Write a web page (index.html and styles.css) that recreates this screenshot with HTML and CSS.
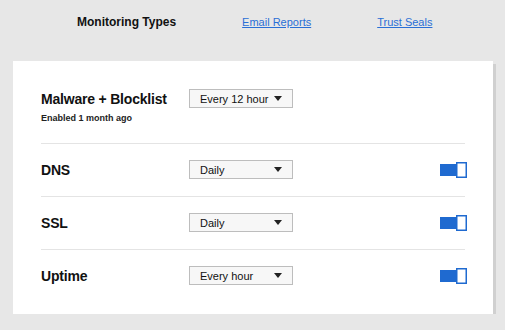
FILE: index.html
```html
<!DOCTYPE html>
<html lang="en">

<head>
    <meta charset="UTF-8">
    <meta name="viewport" content="width=device-width, initial-scale=1.0">
    <title>Monitoring Settings</title>
    <link rel="stylesheet" href="styles.css">
</head>

<body>

    <!-- Tabs -->
    <nav class="tabs">
        <span class="tab active">Monitoring Types</span>
        <a class="tab" href="#">Email Reports</a>
        <a class="tab" href="#">Trust Seals</a>
    </nav>

    <div class="card">
        <div class="row first">
            <div class="title">Malware + Blocklist</div>
            <div class="dropdown">
                <span>Every 12 hour</span>
                <svg class="caret" width="8" height="5" viewBox="0 0 8 5"><path d="M0 0h8L4 5z" fill="#222" /></svg>
            </div>
            <div></div>
            <div class="subtitle">Enabled 1 month ago</div>
        </div>

        <div class="row">
            <div class="title">DNS</div>
            <div class="dropdown">
                <span>Daily</span>
                <svg class="caret" width="8" height="5" viewBox="0 0 8 5"><path d="M0 0h8L4 5z" fill="#222" /></svg>
            </div>
            <div class="toggle">
                <svg width="27" height="16" viewBox="0 0 27 16">
                    <rect x="0" y="2" width="17" height="12" fill="#1f6ad0" />
                    <rect x="16.75" y="0.75" width="9.5" height="14.5" fill="#fff" stroke="#1f6ad0" stroke-width="1.5" />
                </svg>
            </div>
        </div>

        <div class="row">
            <div class="title">SSL</div>
            <div class="dropdown">
                <span>Daily</span>
                <svg class="caret" width="8" height="5" viewBox="0 0 8 5"><path d="M0 0h8L4 5z" fill="#222" /></svg>
            </div>
            <div class="toggle">
                <svg width="27" height="16" viewBox="0 0 27 16">
                    <rect x="0" y="2" width="17" height="12" fill="#1f6ad0" />
                    <rect x="16.75" y="0.75" width="9.5" height="14.5" fill="#fff" stroke="#1f6ad0" stroke-width="1.5" />
                </svg>
            </div>
        </div>

        <div class="row last">
            <div class="title">Uptime</div>
            <div class="dropdown">
                <span>Every hour</span>
                <svg class="caret" width="8" height="5" viewBox="0 0 8 5"><path d="M0 0h8L4 5z" fill="#222" /></svg>
            </div>
            <div class="toggle">
                <svg width="27" height="16" viewBox="0 0 27 16">
                    <rect x="0" y="2" width="17" height="12" fill="#1f6ad0" />
                    <rect x="16.75" y="0.75" width="9.5" height="14.5" fill="#fff" stroke="#1f6ad0" stroke-width="1.5" />
                </svg>
            </div>
        </div>
    </div>

</body>

</html>
```

FILE: styles.css
```css
body {
    font-family: "Liberation Sans", Arial, sans-serif;
    margin: 0;
    padding: 0;
    background-color: #e7e7e7;
    color: #111;
}

/* Tabs */
.tabs {
    display: flex;
    align-items: center;
    gap: 66px;
    padding: 14px 0 0 77px;
    height: 15px;
    font-size: 11px;
}

.tab {
    color: #2a6fd6;
    text-decoration: underline;
}

.tab.active {
    color: #111;
    font-size: 12px;
    font-weight: bold;
    text-decoration: none;
}

/* Card */
.card {
    margin: 32px 0 0 13px;
    width: 424px;
    padding: 0 28px;
    background-color: #fff;
    box-shadow: 3px 3px 0 #d0d0d0;
}

.row {
    display: grid;
    grid-template-columns: 148px 104px 1fr;
    align-items: center;
    padding: 16px 0 17px;
    border-top: 1px solid #e4e4e4;
}

.row.first {
    border-top: none;
    padding: 28px 0 19px;
}

.row.last {
    padding-bottom: 29px;
}

.title {
    font-size: 14px;
    font-weight: bold;
    letter-spacing: -0.2px;
}

.subtitle {
    grid-column: 1 / 4;
    margin-top: 4px;
    font-size: 9px;
    line-height: 12px;
    font-weight: bold;
    color: #222;
}

.dropdown {
    display: flex;
    align-items: center;
    justify-content: space-between;
    box-sizing: border-box;
    height: 19px;
    padding: 0 10px 0 10px;
    border: 1px solid #bdbdbd;
    background-color: #f7f7f7;
    font-size: 11px;
}

.toggle {
    justify-self: end;
    margin-right: -2px;
    height: 16px;
}

.toggle svg {
    display: block;
}
```
